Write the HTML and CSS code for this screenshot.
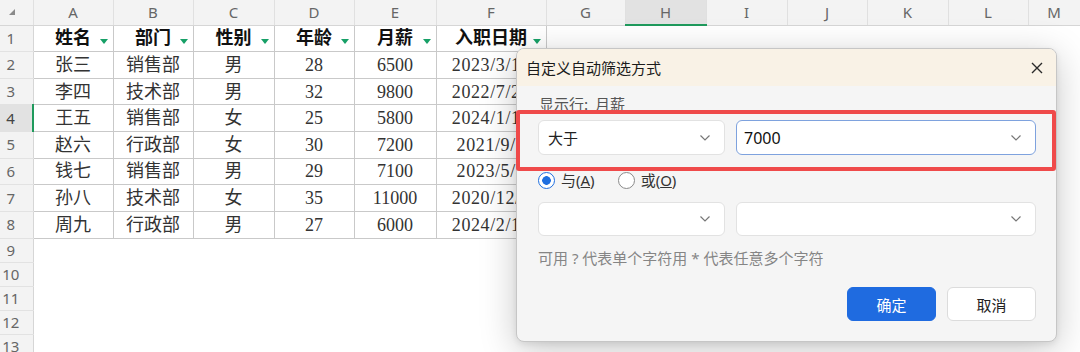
FILE: index.html
```html
<!DOCTYPE html>
<html lang="zh-CN">
<head>
    <meta charset="UTF-8">
    <title>自定义自动筛选方式</title>
    <link rel="stylesheet" href="styles.css">
</head>
<body>
    <table class="grid">
        <colgroup>
            <col class="w33"><col class="w80"><col class="w80"><col class="w81"><col class="w80"><col class="w82"><col class="w110">
            <col class="w79"><col class="w81"><col class="w81"><col class="w80"><col class="w81"><col class="w80"><col class="w52">
        </colgroup>
        <tr class="hdr">
            <th class="corner"><span class="tri"></span></th>
            <th>A</th><th>B</th><th>C</th><th>D</th><th>E</th><th>F</th><th>G</th>
            <th class="sel">H</th><th>I</th><th>J</th><th>K</th><th>L</th><th>M</th>
        </tr>
        <tr class="row">
            <th class="rn">1</th>
            <td class="cell head">姓名<i class="flt"></i></td>
            <td class="cell head">部门<i class="flt"></i></td>
            <td class="cell head">性别<i class="flt"></i></td>
            <td class="cell head">年龄<i class="flt"></i></td>
            <td class="cell head">月薪<i class="flt"></i></td>
            <td class="cell head">入职日期<i class="flt"></i></td>
            <td colspan="7"></td>
        </tr>
        <tr class="row">
            <th class="rn">2</th>
            <td class="cell">张三</td><td class="cell">销售部</td><td class="cell">男</td><td class="cell">28</td><td class="cell">6500</td><td class="cell date">2023/3/15</td>
            <td colspan="7"></td>
        </tr>
        <tr class="row">
            <th class="rn">3</th>
            <td class="cell">李四</td><td class="cell">技术部</td><td class="cell">男</td><td class="cell">32</td><td class="cell">9800</td><td class="cell date">2022/7/20</td>
            <td colspan="7"></td>
        </tr>
        <tr class="row">
            <th class="rn sel">4</th>
            <td class="cell">王五</td><td class="cell">销售部</td><td class="cell">女</td><td class="cell">25</td><td class="cell">5800</td><td class="cell date">2024/1/10</td>
            <td colspan="7"></td>
        </tr>
        <tr class="row">
            <th class="rn">5</th>
            <td class="cell">赵六</td><td class="cell">行政部</td><td class="cell">女</td><td class="cell">30</td><td class="cell">7200</td><td class="cell date">2021/9/5</td>
            <td colspan="7"></td>
        </tr>
        <tr class="row">
            <th class="rn">6</th>
            <td class="cell">钱七</td><td class="cell">销售部</td><td class="cell">男</td><td class="cell">29</td><td class="cell">7100</td><td class="cell date">2023/5/8</td>
            <td colspan="7"></td>
        </tr>
        <tr class="row">
            <th class="rn">7</th>
            <td class="cell">孙八</td><td class="cell">技术部</td><td class="cell">女</td><td class="cell">35</td><td class="cell">11000</td><td class="cell date">2020/12/1</td>
            <td colspan="7"></td>
        </tr>
        <tr class="row">
            <th class="rn">8</th>
            <td class="cell">周九</td><td class="cell">行政部</td><td class="cell">男</td><td class="cell">27</td><td class="cell">6000</td><td class="cell date">2024/2/18</td>
            <td colspan="7"></td>
        </tr>
        <tr class="row-s"><th class="rn">9</th><td colspan="13"></td></tr>
        <tr class="row-s"><th class="rn">10</th><td colspan="13"></td></tr>
        <tr class="row-s"><th class="rn">11</th><td colspan="13"></td></tr>
        <tr class="row-s"><th class="rn">12</th><td colspan="13"></td></tr>
        <tr class="row-s"><th class="rn">13</th><td colspan="13"></td></tr>
    </table>

    <div class="dialog">
        <div class="dlg-title">
            <span>自定义自动筛选方式</span>
            <svg class="close" width="12" height="12" viewBox="0 0 12 12"><path d="M1 1L11 11M11 1L1 11" stroke="#2a2a2a" stroke-width="1.4" fill="none"/></svg>
        </div>
        <div class="dlg-body">
            <div class="label">显示行:&nbsp; 月薪</div>
            <div class="cond">
                <div class="select op">
                    <span>大于</span>
                    <svg width="10" height="6" viewBox="0 0 10 6"><path d="M0.5 0.5L5 5L9.5 0.5" stroke="#777" stroke-width="1.2" fill="none"/></svg>
                </div>
                <div class="select val focus">
                    <span class="num">7000</span>
                    <svg width="10" height="6" viewBox="0 0 10 6"><path d="M0.5 0.5L5 5L9.5 0.5" stroke="#777" stroke-width="1.2" fill="none"/></svg>
                </div>
            </div>
            <div class="radios">
                <label class="radio on"><i></i><span>与(<u>A</u>)</span></label>
                <label class="radio"><i></i><span>或(<u>O</u>)</span></label>
            </div>
            <div class="cond second">
                <div class="select op">
                    <span></span>
                    <svg width="10" height="6" viewBox="0 0 10 6"><path d="M0.5 0.5L5 5L9.5 0.5" stroke="#777" stroke-width="1.2" fill="none"/></svg>
                </div>
                <div class="select val">
                    <span></span>
                    <svg width="10" height="6" viewBox="0 0 10 6"><path d="M0.5 0.5L5 5L9.5 0.5" stroke="#777" stroke-width="1.2" fill="none"/></svg>
                </div>
            </div>
            <div class="hint">可用 ? 代表单个字符用 * 代表任意多个字符</div>
            <div class="actions">
                <button class="btn primary">确定</button>
                <button class="btn">取消</button>
            </div>
        </div>
        <!-- красная рамка-выделение поверх условия -->
        <div class="mark"></div>
    </div>
</body>
</html>
```
FILE: styles.css
```css
body {
    margin: 0;
    width: 1080px;
    height: 352px;
    overflow: hidden;
    background: #fff;
    font-family: "Noto Sans CJK SC", sans-serif;
    position: relative;
}
.grid {
    border-collapse: collapse;
    table-layout: fixed;
    width: 1080px;
}
.w33 { width: 33px; }
.w52 { width: 52px; }
.w79 { width: 79px; }
.w80 { width: 80px; }
.w81 { width: 81px; }
.w82 { width: 82px; }
.w110 { width: 110px; }
.grid th,
.grid td {
    padding: 0;
}
.hdr th {
    height: 24px;
    background: #f3f3f3;
    color: #666;
    font: 400 15px/24px "Noto Sans", sans-serif;
    text-align: center;
    border-right: 1px solid #e0e0e0;
    border-bottom: 1px solid #d6d6d6;
}
.hdr th.sel {
    background: #e2e2e2;
    border-bottom: 2px solid #1f9a5c;
}
.hdr th.corner {
    text-align: left;
    vertical-align: top;
    padding: 9px 0 0 9px;
    box-sizing: border-box;
}
.tri {
    display: block;
    width: 0;
    height: 0;
    border-left: 6px solid transparent;
    border-bottom: 6px solid #8a8a8a;
}
.row {
    height: 26.625px;
}
.row-s {
    height: 24px;
}
.rn {
    background: #f3f3f3;
    color: #666;
    font: 400 15px/1 "Noto Sans", sans-serif;
    text-align: center;
    padding-right: 11px !important;
    border-bottom: 1px solid #e2e2e2;
    border-right: 1px solid #d6d6d6;
}
.rn.sel {
    background: #e2e2e2;
    color: #444;
    border-right: 2px solid #1f9a5c;
}
.cell {
    border: 1px solid #c9c9c9;
    text-align: center;
    font: 18px/1 "Liberation Serif", "Noto Sans CJK SC", serif;
    color: #333;
    white-space: nowrap;
    overflow: hidden;
}
.cell.date {
    letter-spacing: 0.6px;
}
.cell.head {
    font-weight: bold;
    color: #111;
    position: relative;
}
.flt {
    position: absolute;
    right: 5px;
    bottom: 7px;
    width: 0;
    height: 0;
    border-left: 4px solid transparent;
    border-right: 4px solid transparent;
    border-top: 5px solid #17a067;
}

/* диалог */
.dialog {
    position: absolute;
    left: 516px;
    top: 48px;
    width: 541px;
    height: 294px;
    box-sizing: border-box;
    background: #f5f5f5;
    border: 1px solid #c6c6c6;
    border-radius: 8px;
    box-shadow: 0 8px 36px rgba(0,0,0,0.22), 0 2px 6px rgba(0,0,0,0.08);
    color: #333;
}
.dlg-title {
    height: 37px;
    display: flex;
    align-items: center;
    justify-content: space-between;
    padding: 0 13px 0 9px;
    background: #f9f2e6;
    border-radius: 7px 7px 0 0;
    font-size: 15px;
    color: #1b1b1b;
}
.dlg-body {
    padding: 8px 20px 0 21px;
}
.label {
    font-size: 15px;
    line-height: 20px;
    color: #555;
    padding-left: 1px;
}
.cond {
    display: flex;
    gap: 11px;
    margin-top: 6px;
}
.cond.second {
    margin-top: 12px;
}
.select {
    height: 35px;
    box-sizing: border-box;
    display: flex;
    align-items: center;
    justify-content: space-between;
    padding: 0 14px 0 9px;
    background: #fff;
    border: 1px solid #e2e2e2;
    border-radius: 6px;
    font-size: 15px;
    color: #222;
}
.cond.second .select {
    height: 34px;
}
.select.op {
    width: 187px;
}
.select.val {
    flex: 1;
    padding-left: 7px;
}
.select.focus {
    border-color: #7ea2de;
}
.num {
    font: 16px "Noto Sans", sans-serif;
    color: #111;
}
.radios {
    display: flex;
    align-items: center;
    gap: 23px;
    height: 20px;
    margin-top: 15px;
    font: 15px "Noto Sans", "Noto Sans CJK SC", sans-serif;
    color: #333;
}
.radio {
    display: flex;
    align-items: center;
    gap: 6px;
    line-height: 20px;
}
.radio i {
    width: 17px;
    height: 17px;
    box-sizing: border-box;
    border: 1px solid #8a8a8a;
    border-radius: 50%;
    background: #fff;
}
.radio.on i {
    border: 1.5px solid #1f6fe0;
    background: radial-gradient(circle, #1f6fe0 0 4px, #fff 4.6px);
}
.hint {
    margin-top: 12px;
    font: 15px/20px "Noto Sans", "Noto Sans CJK SC", sans-serif;
    color: #858585;
}
.actions {
    display: flex;
    justify-content: flex-end;
    gap: 11px;
    margin-top: 19px;
}
.btn {
    width: 89px;
    height: 34px;
    border-radius: 6px;
    border: 1px solid #dcdcdc;
    background: #fff;
    color: #222;
    font: 15px "Noto Sans CJK SC", sans-serif;
}
.btn.primary {
    background: #1f6be0;
    border-color: #1f6be0;
    color: #fff;
}
.mark {
    position: absolute;
    left: -1px;
    top: 61px;
    width: 540px;
    height: 61px;
    box-sizing: border-box;
    border: 4px solid #ef4a4a;
    border-radius: 3px;
}
```
